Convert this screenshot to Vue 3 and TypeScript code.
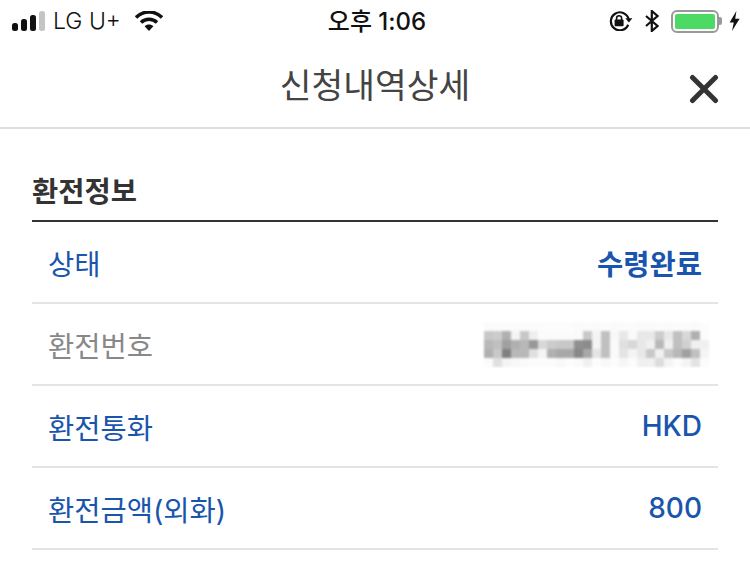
<template>
  <div class="detail-view">
    <div class="status-bar">
      <div class="status-left">
        <svg class="signal" width="34" height="20" viewBox="0 0 34 20">
          <rect x="0" y="12" width="6" height="8" rx="2.5" fill="#111" />
          <rect x="9" y="8" width="6" height="12" rx="2.5" fill="#111" />
          <rect x="18" y="4" width="6" height="16" rx="2.5" fill="#111" />
          <rect x="27" y="0" width="6" height="20" rx="2.5" fill="#c4c4c4" />
        </svg>
        <span class="carrier">LG U+</span>
        <svg class="wifi" width="28" height="20" viewBox="0 0 28 20">
          <path d="M1 6.5C8.5 -0.8 19.5 -0.8 27 6.5" fill="none" stroke="#111" stroke-width="3.6" />
          <path d="M6 11.5C10.5 7.2 17.5 7.2 22 11.5" fill="none" stroke="#111" stroke-width="3.6" />
          <path d="M9.6 15.2C12 12.8 16 12.8 18.4 15.2L14 20Z" fill="#111" />
        </svg>
      </div>
      <div class="clock">오후 1:06</div>
      <div class="status-right">
        <svg width="24" height="20" viewBox="0 0 24 20">
          <path d="M19.2 13.8A9 9 0 1 1 19.6 8" fill="none" stroke="#111" stroke-width="2.2" />
          <path d="M16.4 7.2H23.4L19.9 11.6Z" fill="#111" />
          <rect x="5.6" y="8.6" width="9" height="6.6" rx="1" fill="#111" />
          <path d="M7.6 9V7.2a2.5 2.5 0 0 1 5 0V9" fill="none" stroke="#111" stroke-width="1.6" />
        </svg>
        <svg class="bt" width="14" height="22" viewBox="0 0 14 22">
          <path d="M1 6L12.5 16L6.8 21V1L12.5 6L1 16" fill="none" stroke="#111" stroke-width="2.2" />
        </svg>
        <div class="battery">
          <div class="battery-body"><div class="battery-fill"></div></div>
          <div class="battery-nib"></div>
        </div>
        <svg class="bolt" width="11" height="20" viewBox="0 0 11 20">
          <path d="M7.4 0L0.6 11.4H4.8L3 20L10.6 7.8H6.2Z" fill="#111" />
        </svg>
      </div>
    </div>

    <div class="nav-bar">
      <div class="nav-title">신청내역상세</div>
      <svg class="close" width="30" height="30" viewBox="0 0 30 30">
        <path d="M3.5 3.5L26.5 26.5M26.5 3.5L3.5 26.5" fill="none" stroke="#333" stroke-width="5" stroke-linecap="round" />
      </svg>
    </div>

    <div class="section">
      <h2 class="section-title">환전정보</h2>
      <div class="info-table">
        <div v-for="row in rows" :key="row.label" class="info-row" :class="{ muted: row.hidden }">
          <span class="info-label">{{ row.label }}</span>
          <div v-if="row.hidden" class="mosaic">
            <i v-for="(tone, i) in mosaic" :key="i" :style="{ background: tone }"></i>
          </div>
          <span v-else class="info-value" :class="{ strong: row.strong }">{{ row.value }}</span>
        </div>
      </div>
    </div>
  </div>
</template>

<script setup lang="ts">
interface InfoRow {
  label: string
  value?: string
  strong?: boolean
  hidden?: boolean
}

const rows: InfoRow[] = [
  { label: '상태', value: '수령완료', strong: true },
  { label: '환전번호', hidden: true },
  { label: '환전통화', value: 'HKD' },
  { label: '환전금액(외화)', value: '800' }
]

// the blurred exchange number, 25 x 5 blocks
const mosaic = [
  'fbfbfbfbfbfbfcfcfcfcfafbfafcfafbfbfafafcfafcfbfafc',
  'c8ccb0f4c8eefbfbfbfbfac8f4c0f8e8fae8e8cce8c0d8b0fc',
  'b8c0a0b0b898d8ccc8c8908cf4c0fae0d8e8f0b8f0c0d0f0f0',
  'b0c880b8b8e0f4b0a8a888a8e4c0fae4f4e8c8f0c8b8a0c0f4',
  'fbe0f4f8fafcfcfcf8fcfaf0fcf8fcf6fcf0f0dcf4fcf4e4fc'
].flatMap(line => line.match(/../g)!.slice(0, 25).map(v => `#${v}${v}${v}`))
</script>

<style scoped>
.detail-view {
  width: 750px;
  height: 561px;
  overflow: hidden;
  background: #fff;
  font-family: "Inter", "Noto Sans CJK KR", sans-serif;
}

.status-bar {
  display: grid;
  grid-template-columns: 1fr auto 1fr;
  align-items: center;
  height: 40px;
  padding: 0 10px 0 12px;
  color: #111;
}

.status-left,
.status-right {
  display: flex;
  align-items: center;
}

.status-right {
  justify-content: flex-end;
}

.carrier {
  margin: 0 14px 0 7px;
  font-size: 23px;
  font-weight: 300;
  line-height: 40px;
}

.clock {
  font-size: 24px;
  font-weight: 500;
  line-height: 41px;
  padding: 1px 0 0 2px;
}

.bt {
  margin-left: 12px;
}

.battery {
  display: flex;
  align-items: center;
  margin-left: 12px;
}

.battery-body {
  width: 48px;
  height: 23px;
  box-sizing: border-box;
  padding: 2px;
  border: 2px solid #999;
  border-radius: 6px;
}

.battery-fill {
  height: 100%;
  background: #4cd964;
  border-radius: 2px;
}

.battery-nib {
  width: 3px;
  height: 8px;
  background: #999;
  border-radius: 0 2px 2px 0;
}

.bolt {
  margin-left: 7px;
}

.nav-bar {
  position: relative;
  display: flex;
  align-items: center;
  justify-content: center;
  box-sizing: border-box;
  height: 89px;
  padding-top: 5px;
  border-bottom: 2px solid #ddd;
}

.nav-title {
  font-size: 34.5px;
  color: #444;
  line-height: 50px;
}

.close {
  position: absolute;
  right: 31px;
  top: 34px;
}

.section {
  padding: 0 32px;
}

.section-title {
  margin: 0;
  height: 93px;
  box-sizing: border-box;
  padding-top: 43px;
  font-size: 28.5px;
  font-weight: 700;
  line-height: 40px;
  color: #333;
  border-bottom: 2px solid #333;
}

.info-row {
  display: flex;
  align-items: center;
  justify-content: space-between;
  box-sizing: border-box;
  height: 82px;
  padding: 0 16px;
  border-bottom: 2px solid #e4e4e4;
  font-size: 28.5px;
  color: #1a55ad;
}

.info-row.muted {
  color: #888;
}

.info-value {
  font-size: 28px;
  font-weight: 500;
}

.info-value.strong {
  font-size: 28.5px;
  font-weight: 700;
}

.mosaic {
  display: grid;
  grid-template-columns: repeat(25, 9px);
  grid-auto-rows: 9px;
  margin-right: -7px;
  filter: blur(1px);
}
</style>
